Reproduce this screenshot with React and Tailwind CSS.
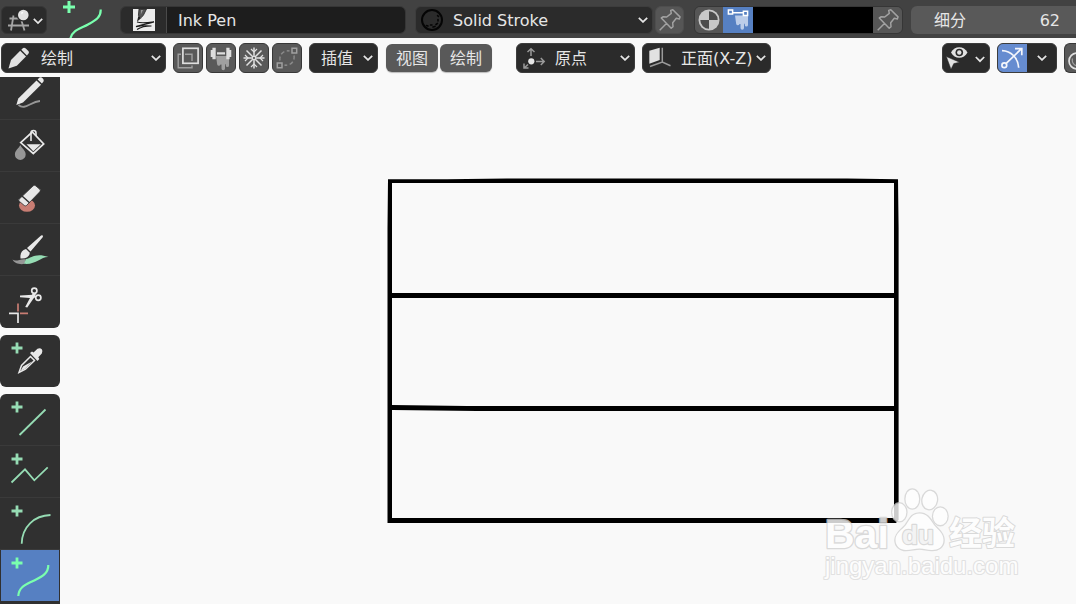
import React from "react";

const FONT = "font-['DejaVu_Sans','Noto_Sans_CJK_SC',sans-serif]";

function Chevron({ className = "" }) {
  return (
    <svg width="10" height="6" viewBox="0 0 10 6" aria-hidden="true" className={`pointer-events-none shrink-0 ${className}`}>
      <path d="M.8 .8 5 4.9 9.2 .8" fill="none" stroke="#e6e6e6" strokeWidth="1.7" />
    </svg>
  );
}

function Select({ label, value, icon, className = "", pad = "" }) {
  return (
    <div className={`grid shrink-0 items-center rounded-md border border-[#3d3d3d] bg-[#2b2b2b] ${className}`}>
      <select
        aria-label={label}
        defaultValue={value}
        className={`col-start-1 row-start-1 h-full w-full appearance-none bg-transparent pt-0.5 text-[#e6e6e6] outline-none ${pad}`}
      >
        <option>{value}</option>
      </select>
      <div className="pointer-events-none col-start-1 row-start-1 justify-self-start">{icon}</div>
      <Chevron className="col-start-1 row-start-1 mr-1 justify-self-end" />
    </div>
  );
}

function IconButton({ label, children, className = "", ...rest }) {
  return (
    <button type="button" aria-label={label} className={`flex shrink-0 items-center justify-center overflow-hidden ${className}`} {...rest}>
      {children}
    </button>
  );
}

function Pin() {
  return (
    <svg width="22" height="22" viewBox="0 0 22 22" fill="none" stroke="#a2a2a2" strokeWidth="1.5" strokeLinejoin="round">
      <path d="M.7 21.3 7.7 14.3M2.3 9 4.3 7.7 7.7 8 12.3 4.3 11.7 1.4 13.8 .8 21 7.9 20.3 10 17.3 9.3 13.7 13.7 14 17.7 12.2 19.2Z" />
    </svg>
  );
}

const DRIP = "M0 0H13V9.5A1.6 1.6 0 0 1 9.8 9.5V8.2H9V12.5A1.6 1.6 0 0 1 5.5 12.5V8.5H4.5A1.7 1.7 0 0 1 1.2 8.5Z";

function TopHeader() {
  return (
    <header className="flex h-[38px] shrink-0 items-center overflow-hidden bg-[#424242] pl-px pt-0.5">
      <IconButton label="Editor type" className="h-7 w-[46px] rounded-md border border-[#363636] bg-[#2b2b2b]">
        <svg width="46" height="28" viewBox="0 0 46 28" className="shrink-0" fill="none">
          <path d="M8.5 12.5H26M7 19.5H28M12.5 9.5 10 24.5M20 13 23.5 24.5" stroke="#a5a5a5" strokeWidth="1.8" />
          <circle cx="22.3" cy="9" r="6.6" fill="#2b2b2b" />
          <circle cx="22.3" cy="9" r="5.3" fill="#e2e2e2" />
          <path d="M20 6.5 22.5 5.8 20.8 8.4Z" fill="#fff" />
          <path d="M32.8 12.8 37 17 41.2 12.8" stroke="#e6e6e6" strokeWidth="1.7" />
        </svg>
      </IconButton>

      <svg width="42" height="38" viewBox="0 0 42 38" aria-hidden="true" className="-mt-0.5 ml-[15px] shrink-0" fill="none" stroke="#7affae">
        <path d="M7 1V13M1 7H13" strokeWidth="3" />
        <path d="M38.7 9.5C39 18 33 20.5 26 24.5S10 30 8.3 39" strokeWidth="2.2" />
      </svg>

      <div className="ml-4 flex h-7 w-[286px] shrink-0 overflow-hidden rounded-md border border-[#363636]">
        <IconButton label="Brush" className="w-[46px] border-r border-[#4a4a4a] bg-[#2b2b2b]">
          <svg width="22" height="22" viewBox="0 0 22 22">
            <rect width="22" height="22" fill="#ececec" />
            <path d="M6 0H13.5L10.5 6 8.3 8.6 5.4 6.6Z" fill="#555" stroke="#222" strokeWidth=".8" />
            <path d="M8 1 10 1 7.8 5.5Z" fill="#999" />
            <path d="M5.3 7 8.3 9 4 12.8Z" fill="#222" />
            <path d="M4 13C8 14.5 16 13.5 21 12.8 15 14.5 7 16.3 3 17.6 9 16.5 14 16.6 18.5 17 13 17 7 18.5 4 20.5" fill="none" stroke="#1c1c1c" strokeWidth="1.2" />
          </svg>
        </IconButton>
        <input aria-label="Brush name" defaultValue="Ink Pen" className="min-w-0 flex-1 bg-[#1d1d1d] pl-[11px] pt-0.5 text-[#e6e6e6] outline-none" />
      </div>

      <Select
        label="Material"
        value="Solid Stroke"
        className="ml-[9px] h-7 w-[238px]"
        pad="pl-[37px]"
        icon={
          <svg width="34" height="26" viewBox="0 0 34 26" fill="none" stroke="#050505">
            <circle cx="16" cy="13" r="10" strokeWidth="2" />
            <path d="M10.5 18.5 12 19M14.5 18H16M17 20 19 19.4M20 17.5 21.5 16.4M22 14V12.5M22.5 9.5 21.6 8.6" strokeWidth="1.6" strokeLinecap="round" />
          </svg>
        }
      />
      <IconButton label="Pin material" className="ml-0.5 h-7 w-[29px] rounded-md border border-[#4e4e4e] bg-[#565656]">
        <Pin />
      </IconButton>

      <div className="ml-2.5 flex h-7 w-[209px] shrink-0 overflow-hidden rounded-md border border-[#363636]">
        <IconButton label="Use material color" className="w-7 bg-[#565656]">
          <svg width="22" height="22" viewBox="0 0 22 22">
            <circle cx="11" cy="11" r="10.5" fill="#c8c8c8" />
            <path d="M11 11V2.3A8.7 8.7 0 0 1 19.7 11ZM11 11V19.7A8.7 8.7 0 0 1 2.3 11Z" fill="#4c4c4c" />
          </svg>
        </IconButton>
        <IconButton label="Use vertex color" aria-pressed="true" className="w-[30px] bg-[#5680c2]">
          <svg width="24" height="24" viewBox="0 0 24 24">
            <g transform="translate(9 7.5)"><path d={DRIP} fill="#bccde9" /></g>
            <path d="M6 4.7H18" stroke="#fff" strokeWidth="1.6" />
            <path d="M2.4 1.9H6.6V6.1H2.4ZM17.4 3.2H21.6V7.4H17.4Z" fill="#5680c2" stroke="#fff" strokeWidth="1.5" />
          </svg>
        </IconButton>
        <button type="button" aria-label="Vertex color" className="flex-1 bg-black" />
        <IconButton label="Pin color" className="w-[29px] bg-[#565656]">
          <Pin />
        </IconButton>
      </div>

      <label className="ml-2 flex h-7 min-w-0 flex-1 items-center rounded-l-md bg-[#595959] pl-[23px] pr-4 pt-0.5 text-[#e6e6e6]">
        <span className="shrink-0">细分</span>
        <input defaultValue="62" className="min-w-0 flex-1 bg-transparent text-right outline-none" />
      </label>
    </header>
  );
}

const TOGGLE = "h-[30px] w-[30px] rounded-md border border-[#383838] bg-[#595959]";
const MENU = "h-7 w-[52px] shrink-0 rounded-md bg-[#595959] pt-0.5 text-[#e6e6e6] shadow-[0_1px_1px_#bbb]";

function ToolHeader() {
  return (
    <div className="flex h-[39px] shrink-0 items-center overflow-hidden pl-px pt-px">
      <Select
        label="Mode"
        value="绘制"
        className="h-[30px] w-[165px]"
        pad="pl-[39px]"
        icon={
          <svg width="36" height="28" viewBox="0 0 36 28" fill="#e2e2e2">
            <path d="M6.5 24.5 9 16 18.2 6.8 24 12.6 14.8 21.8Z" />
            <path d="M19.3 5.7 21.1 4.1Q22.3 3.2 23.5 4.3L26.4 7.1Q27.5 8.4 26.5 9.6L24.9 11.4Z" />
          </svg>
        }
      />

      <div className="ml-[7px] flex gap-[3px]">
        <IconButton label="Multiframe" className={TOGGLE}>
          <svg width="30" height="30" viewBox="0 0 30 30" className="shrink-0" fill="none">
            <path d="M8 11.3H5.2V24.7H19V22.5M12 11.3H19V18" stroke="#a0a0a0" strokeWidth="1.4" />
            <rect x="9.9" y="5.3" width="15.2" height="15" stroke="#dedede" strokeWidth="1.7" />
          </svg>
        </IconButton>
        <IconButton label="Automerge" className={TOGGLE}>
          <svg width="30" height="30" viewBox="0 0 30 30" className="shrink-0">
            <g transform="translate(10 13)"><path d={DRIP} fill="#a0a0a0" /></g>
            <path d="M4.7 7H6.4V4.7H9.7V16.3H6.4V14H4.7ZM25.3 7H23.6V4.7H20.3V16.3H23.6V14H25.3ZM11 9.3H19V11.5H11Z" fill="#dedede" />
          </svg>
        </IconButton>
        <IconButton label="Weight data" className={TOGGLE}>
          <svg width="30" height="30" viewBox="0 0 30 30" className="shrink-0" fill="none" stroke="#e0e0e0" strokeWidth="1.5">
            <path d="M15 4.5V25.5M4.5 15H25.5M7.5 7.5 22.5 22.5M22.5 7.5 7.5 22.5" />
            <path d="M12 6 15 9 18 6M12 24 15 21 18 24M6 12 9 15 6 18M24 12 21 15 24 18" strokeWidth="1.2" />
            <circle cx="15" cy="15" r="1.6" fill="#595959" strokeWidth="1" />
          </svg>
        </IconButton>
        <IconButton label="Guides" className={TOGGLE}>
          <svg width="30" height="30" viewBox="0 0 30 30" className="shrink-0" fill="none" stroke="#a0a0a0" strokeWidth="1.5">
            <path d="M20 5.3H24.7V10H20ZM5.3 20H10V24.7H5.3Z" />
            <path d="M8 17.5A8 8 0 0 1 17.5 8M22 12.5A8 8 0 0 1 12.5 22" strokeDasharray="4 2.5" stroke="#8a8a8a" />
          </svg>
        </IconButton>
      </div>

      <Select label="Interpolate" value="插值" className="ml-[7px] h-[30px] w-[69px]" pad="pl-[11px]" />

      <nav className="ml-2 flex gap-0.5">
        <button type="button" className={MENU}>视图</button>
        <button type="button" className={MENU}>绘制</button>
      </nav>

      <Select
        label="Stroke placement"
        value="原点"
        className="ml-6 h-[30px] w-[119px]"
        pad="pl-[38px]"
        icon={
          <svg width="36" height="28" viewBox="0 0 36 28" fill="none" stroke="#9a9a9a" strokeWidth="1.5">
            <path d="M14 12V5M10.5 8 14 4.8 17.5 8M19 17.5H27M23.8 14 27.2 17.5 23.8 21M11 20.5 7.2 24M7 19.5V24H11.5" />
            <circle cx="14.3" cy="17.3" r="3.1" fill="#e6e6e6" stroke="none" />
          </svg>
        }
      />
      <Select
        label="Drawing plane"
        value="正面(X-Z)"
        className="ml-[7px] h-[30px] w-[129px]"
        pad="pl-[38px]"
        icon={
          <svg width="36" height="28" viewBox="0 0 36 28">
            <path d="M6.3 6.7 16.7 3.7V16L6.3 19.7Z" fill="#e2e2e2" />
            <path d="M19.3 3.7V18M7 22.5 19.3 18 27.5 21.8" fill="none" stroke="#9a9a9a" strokeWidth="1.5" />
          </svg>
        }
      />

      <div className="ml-auto flex gap-[7px]">
        <IconButton label="Object visibility" className="h-[30px] w-12 rounded-md border border-[#3d3d3d] bg-[#2b2b2b]">
          <svg width="48" height="30" viewBox="0 0 48 30" className="shrink-0">
            <path d="M9 9.5C12.5 2.5 22 2.5 25.5 9.5 22 16.5 12.5 16.5 9 9.5Z" fill="#e2e2e2" />
            <circle cx="17.3" cy="9.5" r="3.8" fill="#2b2b2b" />
            <circle cx="17.3" cy="9.5" r="2.2" fill="#e2e2e2" />
            <path d="M4.3 13.6 17.5 19.2 11.8 20.6 9 26.2Z" fill="#e2e2e2" stroke="#2b2b2b" strokeWidth=".5" />
            <path d="M33.8 14 38 18.2 42.2 14" fill="none" stroke="#e6e6e6" strokeWidth="1.7" />
          </svg>
        </IconButton>
        <div className="flex h-[30px] w-[60px] overflow-hidden rounded-md border border-[#3d3d3d] bg-[#2b2b2b]">
          <IconButton label="Show gizmos" aria-pressed="true" className="w-[29px] bg-[#668cd0]">
            <svg width="29" height="28" viewBox="0 0 29 28" className="shrink-0" fill="none" stroke="#f4f6fb" strokeWidth="1.7">
              <path d="M4 6.7C13 7 20 13.5 20.7 23.7M8.2 19.3 23 5.2M17 4.6H23.8V11.2" />
              <circle cx="6.3" cy="21.3" r="2.4" />
            </svg>
          </IconButton>
          <IconButton label="Gizmo options" className="flex-1">
            <Chevron />
          </IconButton>
        </div>
        <button type="button" aria-label="Show overlays" className="h-[30px] w-3 shrink-0 overflow-hidden rounded-l-md border border-r-0 border-[#383838] bg-[#595959]">
          <svg width="28" height="28" viewBox="0 0 28 28" className="max-w-none" fill="none" stroke="#e0e0e0" strokeWidth="1.7">
            <circle cx="12" cy="17" r="8" />
            <path d="M7.5 14.5A6 6 0 0 0 12 22" stroke="#a0a0a0" strokeWidth="1.2" />
          </svg>
        </button>
      </div>
    </div>
  );
}

const Plus = ({ color = "#96dcb4" }) => <path d="M17 7.5V18.5M11.5 13H22.5" stroke={color} strokeWidth="2.8" />;

const GROUPS = [
  [
    {
      name: "Draw",
      art: (
        <>
          <path d="M18.5 37C25 42.5 30 34 40 33" stroke="#969696" strokeWidth="1.8" />
          <path d="M16.3 37 18.3 30.5 36.5 12.5 41 16.8 23 34.5Z" fill="#e8e8e8" />
          <path d="M37.6 11.4 39.5 9.6Q41.2 8.8 42.6 10.2 44.2 11.7 43.5 13.6L41.9 15.5Z" fill="#e8e8e8" />
        </>
      ),
    },
    {
      name: "Fill",
      art: (
        <>
          <path d="M20.7 22.6 32.3 12 43.7 24 33.3 33.5Z" stroke="#e8e8e8" strokeWidth="1.7" />
          <path d="M26.5 24.3H40.8L33.3 31.3Z" fill="#e8e8e8" />
          <path d="M31 21V13A2.5 2.5 0 0 1 36 13V16" stroke="#e8e8e8" strokeWidth="1.6" />
          <path d="M20.3 25C22 28.5 25.7 30.5 25.7 34.5A5.4 5.4 0 0 1 14.9 34.5C14.9 30.5 18.6 28.5 20.3 25Z" fill="#969696" />
        </>
      ),
    },
    {
      name: "Erase",
      art: (
        <>
          <ellipse cx="27" cy="33.5" rx="8" ry="6.3" fill="#c87d73" />
          <path d="M19 27.3 33.2 13.8Q34.5 12.8 35.7 13.8L39.8 17.3Q40.8 18.5 39.8 19.8L26.5 33.5Q25.5 34.3 24.3 33.5L19.3 29.3Q18.4 28.4 19 27.3Z" fill="#e8e8e8" stroke="#303030" strokeWidth=".8" />
          <path d="M22 24 29.5 30.8" stroke="#303030" strokeWidth="1.4" />
        </>
      ),
    },
    {
      name: "Tint",
      art: (
        <>
          <path d="M12.5 35.5C16 38.5 21 34 26 35.5L24.5 39.8C20 41 14 39 12.5 35.5Z" fill="#969696" />
          <path d="M26 35C31 34.5 35 28.5 48.5 33 41 32.5 36 41 24 39.8Z" fill="#96dcb4" />
          <path d="M42.8 11.5Q41.5 10.8 40.5 12L27 24 30.5 27.5 42.5 13.5Q43.3 12.3 42.8 11.5Z" fill="#e8e8e8" />
          <path d="M26 25 29.8 28.8C29.5 32.5 26.5 35 20.5 34.5 20 29.5 21.5 26 26 25Z" fill="#e8e8e8" />
        </>
      ),
    },
    {
      name: "Cutter",
      art: (
        <>
          <path d="M20 19.5 33 18.8 37 20.7 33 22.3 20 21.2Z" fill="#e8e8e8" />
          <path d="M25.2 31 31.3 19.5 33.7 16.5 36 18 33.5 22.5 27.3 31.5Z" fill="#e8e8e8" />
          <circle cx="34.3" cy="14.8" r="2.6" stroke="#e8e8e8" strokeWidth="1.7" />
          <circle cx="38.3" cy="21.7" r="2.6" stroke="#e8e8e8" strokeWidth="1.7" />
          <path d="M9 37.3H18V47" stroke="#e8e8e8" strokeWidth="1.7" />
          <path d="M18 27.5V35.5M20 37.3H28" stroke="#c87d73" strokeWidth="1.7" />
        </>
      ),
    },
  ],
  [
    {
      name: "Eyedropper",
      art: (
        <>
          <Plus />
          <path d="M19 37.5 21.5 30.5 30.5 21.5 34.5 25.5 25.5 34.2Z" stroke="#e8e8e8" strokeWidth="1.5" />
          <path d="M23 31.5 32 26.5 25 33.8 20.5 36Z" fill="#e8e8e8" />
          <path d="M30 18 32 16.5 33.5 17.5 37.5 13.8Q40 12.5 41.8 14.3 43.2 16.2 41.8 18.5L38.3 22.3 39.3 24 37.5 26Z" fill="#e8e8e8" />
        </>
      ),
    },
  ],
  [
    { name: "Line", art: (<><Plus /><path d="M19.5 41 45.5 15.5" stroke="#96dcb4" strokeWidth="1.8" /></>) },
    { name: "Polyline", art: (<><Plus /><path d="M11.5 36.5 25 23.3 34.3 34.3 47.7 21.3" stroke="#96dcb4" strokeWidth="1.8" /></>) },
    { name: "Arc", art: (<><Plus /><path d="M21.7 45.7C22 29 34 17.5 50.5 17" stroke="#96dcb4" strokeWidth="1.8" /></>) },
    {
      name: "Curve",
      active: true,
      art: (<><Plus color="#7affae" /><path d="M48.3 15C48.5 24 41 27 33 31S19 37 18.3 46" stroke="#7affae" strokeWidth="2.2" /></>),
    },
  ],
];

function Toolbar() {
  return (
    <aside aria-label="Tools" className="flex w-[60px] shrink-0 flex-col gap-[7px] overflow-hidden">
      {GROUPS.map((tools, g) => (
        <div
          key={g}
          className={`flex flex-col overflow-hidden bg-[#303030] ${g === 0 ? "shrink-0 rounded-b-md" : g === 1 ? "shrink-0 rounded-md" : "flex-1 rounded-t-md"}`}
        >
          {tools.map((tool, i) => (
            <button
              key={tool.name}
              type="button"
              aria-label={tool.name}
              aria-pressed={!!tool.active}
              className={`flex shrink-0 items-end overflow-hidden ${g === 0 && i === 0 ? "h-[43px]" : "h-[52px]"} ${
                tool.active
                  ? "bg-[#5680c2] shadow-[inset_1px_0_0_#303030,inset_-1px_-1px_0_#303030]"
                  : i < tools.length - 1
                    ? "shadow-[inset_0_-1px_0_#3a3a3a]"
                    : ""
              }`}
            >
              <svg width="60" height="52" viewBox="0 0 60 52" fill="none" className="shrink-0">{tool.art}</svg>
            </button>
          ))}
        </div>
      ))}
    </aside>
  );
}

function Watermark() {
  return (
    <svg
      width="204"
      height="100"
      viewBox="0 0 204 100"
      className="absolute bottom-5 right-[52px] opacity-80"
      fill="#ffffff"
      stroke="#d2d2d2"
      strokeWidth="2.6"
      strokeLinejoin="round"
      paintOrder="stroke"
    >
      <text x="5" y="64" className="font-['Liberation_Sans',sans-serif] text-[41px] font-bold">Bai</text>
      <ellipse cx="79.3" cy="28.3" rx="7" ry="9" />
      <ellipse cx="92.3" cy="15" rx="6.8" ry="9.4" />
      <ellipse cx="109.7" cy="16" rx="7.2" ry="9.2" transform="rotate(10 109.7 16)" />
      <ellipse cx="120.3" cy="32.3" rx="7.2" ry="8.8" />
      <path d="M99.5 29.5C107 29.5 110 35 114 41 118 46 123.5 49 123.5 56 123.5 63 118 66 112 66 107 66 104 64.5 99.5 64.5S91 66 86 66C80 66 75.5 62 75.5 56 75.5 49 82 46 86 41 90 35 92 29.5 99.5 29.5Z" />
      <text x="82" y="60" fill="#f2f2f2" strokeWidth="2.4" className="font-['Liberation_Sans',sans-serif] text-[26px] font-bold">du</text>
      <text x="129" y="61" strokeWidth="2" className="font-['Noto_Sans_CJK_SC',sans-serif] text-[33px] font-bold">经验</text>
      <text x="5" y="90" stroke="#dcdcdc" strokeWidth="2.2" className="font-['Liberation_Sans',sans-serif] text-[24px]">jingyan.baidu.com</text>
    </svg>
  );
}

export default function App() {
  return (
    <div className={`flex h-screen flex-col overflow-hidden bg-[#f9f9f9] text-base ${FONT}`}>
      <TopHeader />
      <ToolHeader />
      <div className="relative flex min-h-0 flex-1">
        <Toolbar />
        <main className="min-w-0 flex-1 overflow-hidden pl-[327px] pt-[101px]">
          <svg width="512" height="345" viewBox="0 0 512 345" role="img" aria-label="Grease pencil sketch">
            <path
              d="M.8 1.2 H60 L120 .5 H460 L511 1.2 L511.6 50 V342 L509 345 H.5 V50 L1 1.2Z
                 M5 5V115H507V5ZM5 120V227L80 228H507V120ZM5 232V340H507V233H90Z"
              fillRule="evenodd"
            />
          </svg>
        </main>
        <Watermark />
      </div>
    </div>
  );
}
